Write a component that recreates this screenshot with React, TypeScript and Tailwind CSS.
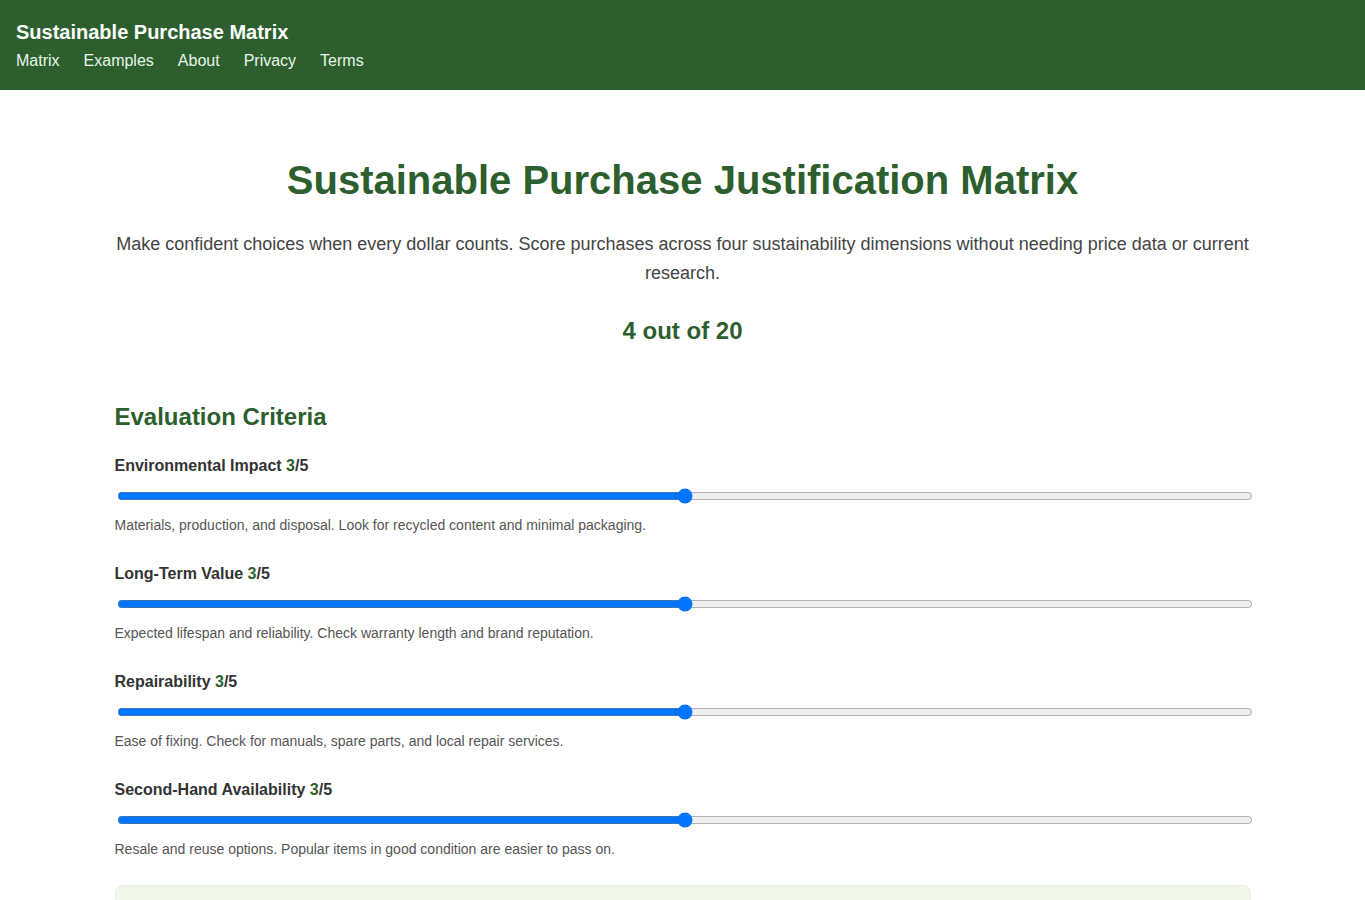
import React, { useState } from 'react';

const criteria = [
  {
    name: 'Environmental Impact',
    help: 'Materials, production, and disposal. Look for recycled content and minimal packaging.'
  },
  {
    name: 'Long-Term Value',
    help: 'Expected lifespan and reliability. Check warranty length and brand reputation.'
  },
  {
    name: 'Repairability',
    help: 'Ease of fixing. Check for manuals, spare parts, and local repair services.'
  },
  {
    name: 'Second-Hand Availability',
    help: 'Resale and reuse options. Popular items in good condition are easier to pass on.'
  }
];

const App: React.FC = () => {
  const [scores, setScores] = useState<number[]>([3, 3, 3, 3]);

  const setScore = (idx: number, v: number) => {
    setScores((s) => s.map((x, i) => (i === idx ? v : x)));
  };

  return (
    <div className="min-h-screen bg-white text-[#333] font-['Liberation_Sans',Arial,sans-serif]">
      <header className="bg-[#2d5f2e] px-4 pt-5 pb-[17px]">
        <div className="text-white text-xl font-bold leading-6">Sustainable Purchase Matrix</div>
        <nav className="flex gap-6 mt-[5px] text-base leading-6 text-[#e8f5e9]">
          <a href="#">Matrix</a>
          <a href="#">Examples</a>
          <a href="#">About</a>
          <a href="#">Privacy</a>
          <a href="#">Terms</a>
        </nav>
      </header>

      <main className="max-w-[1200px] mx-auto px-8 pt-[66px] pb-10">
        <h1 className="text-center text-[40px] leading-[48px] font-bold text-[#2d5f2e]">
          Sustainable Purchase Justification Matrix
        </h1>
        <p className="text-center text-lg leading-[29px] text-[#444] mt-[26px]">
          Make confident choices when every dollar counts. Score purchases across four sustainability dimensions without needing price data or current research.
        </p>
        <div className="text-center text-2xl leading-[29px] font-bold text-[#2d5f2e] mt-[28px]">
          4 out of 20
        </div>

        <h2 className="text-2xl leading-[29px] font-bold text-[#2d5f2e] mt-[57px]">Evaluation Criteria</h2>

        <div className="mt-[25px] flex flex-col gap-[29px]">
          {criteria.map((c, idx) => (
            <div key={c.name}>
              <label className="block text-base leading-5 font-bold text-[#333]">
                {c.name} <span className="text-[#2d5f2e]">{scores[idx]}</span>/5
              </label>
              <input
                type="range"
                min={1}
                max={5}
                value={scores[idx]}
                onChange={(e) => setScore(idx, Number(e.target.value))}
                className="block w-full ml-[2px] mt-[12px]"
              />
              <p className="text-sm leading-5 text-[#555] mt-[11px]">{c.help}</p>
            </div>
          ))}
        </div>

        <div className="mt-[26px] rounded-lg bg-[#f1f8e9] border border-[#e6f2da] p-6 h-40" />
      </main>
    </div>
  );
};

export default App;
